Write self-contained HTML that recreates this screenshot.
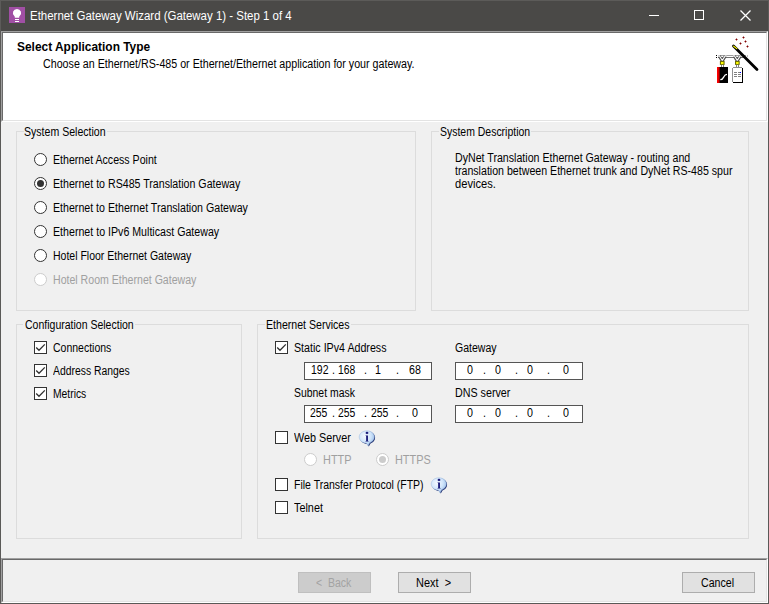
<!DOCTYPE html>
<html><head><meta charset="utf-8">
<style>
*{box-sizing:border-box;margin:0;padding:0}
html,body{width:769px;height:604px;overflow:hidden;background:#f0f0f0}
body{position:relative;font-family:"Liberation Sans",sans-serif;font-size:12px;color:#000;line-height:13px}
.abs,.t,.gb,.cb,.rb,.ip,.btn{position:absolute}
.t{white-space:pre;height:13px;transform-origin:0 0}
.t.w{color:#fff;line-height:15px;height:15px}
.t.b{font-weight:bold}
.t.g{color:#a0a0a0}
.t.g2{color:#a3a3a3}

#titlebar{left:0;top:0;width:769px;height:31px;background:#4a4947}
#header{left:3px;top:33px;width:763px;height:87px;background:#fff}
.gb{border:1px solid #dcdcdc}
.gap{position:absolute;height:1px;background:#f0f0f0}
.rb{width:13px;height:13px;border:1px solid #333;border-radius:50%;background:#fff}
.rb.on::after{content:"";position:absolute;left:2px;top:2px;width:7px;height:7px;border-radius:50%;background:#333}
.rb.dis{border-color:#ccc;background:#fff}
.rb.dis.on::after{background:#ccc}
.cb{width:13px;height:13px;border:1px solid #333;background:#fff}
.cb svg{position:absolute;left:0;top:0}
.ip{height:18px;width:128px;border:1px solid #555;background:#fff}
.btn{height:21px;width:73px;border:1px solid #adadad;background:#e1e1e1}
.btn.dis{background:#ccc;border-color:#bfbfbf}
</style></head><body>
<div class="abs" id="titlebar"></div>
<div class="abs" style="left:0;top:0;width:769px;height:31px;border:1px solid #5c5b59;border-bottom:0"></div>
<!-- app icon -->
<svg class="abs" style="left:9px;top:7px" width="16" height="16" viewBox="0 0 16 16"><rect width="16" height="16" fill="#a04fa4"/><path d="M8 1.900a4.100 4.100 0 0 0-2.700 7.200c.4.400.5.800.5 1.200v.5h4.400v-.5c0-.4.100-.8.500-1.200A4.100 4.100 0 0 0 8 1.900z" fill="#fff"/><rect x="6" y="12" width="4" height="1" fill="#fff"/><rect x="6" y="14" width="4" height="1" fill="#fff"/></svg>
<!-- window controls -->
<svg class="abs" style="left:640px;top:0" width="128" height="31" viewBox="0 0 128 31" fill="none" stroke="#fff" stroke-width="1"><path d="M9 15.500h10"/><rect x="54.500" y="10.500" width="9" height="9"/><path d="M100.500 10.500l10 10M110.500 10.500l-10 10" stroke-width="1.250"/></svg>

<div class="abs" style="left:0;top:31px;width:769px;height:573px;border-left:1px solid #5a5957;border-right:1px solid #5a5957;border-bottom:1px solid #5a5957"></div>
<!-- sunken header panel -->
<div class="abs" style="left:1px;top:31px;width:767px;height:91px;border-top:1px solid #a0a0a0;border-left:1px solid #a0a0a0;border-right:1px solid #fff;border-bottom:1px solid #fff"></div>
<div class="abs" style="left:2px;top:32px;width:765px;height:89px;border-top:1px solid #696969;border-left:1px solid #696969;border-right:1px solid #e3e3e3;border-bottom:1px solid #e3e3e3;background:#fff"></div>
<!-- sunken bottom panel -->
<div class="abs" style="left:1px;top:558px;width:767px;height:45px;border-top:1px solid #a0a0a0;border-left:1px solid #a0a0a0;border-right:1px solid #fff;border-bottom:1px solid #fff"></div>
<div class="abs" style="left:2px;top:559px;width:765px;height:43px;border-top:1px solid #696969;border-left:1px solid #696969;border-right:1px solid #e3e3e3;border-bottom:1px solid #e3e3e3"></div>

<!-- group boxes -->
<div class="gb" style="left:16px;top:131px;width:400px;height:180px"></div><div class="gap" style="left:24px;top:131px;width:83px"></div>
<div class="gb" style="left:431px;top:131px;width:318px;height:180px"></div><div class="gap" style="left:439px;top:131px;width:92px"></div>
<div class="gb" style="left:16px;top:324px;width:226px;height:215px"></div><div class="gap" style="left:23px;top:324px;width:112px"></div>
<div class="gb" style="left:257px;top:324px;width:492px;height:215px"></div><div class="gap" style="left:265px;top:324px;width:86px"></div>

<!-- radios -->
<div class="rb" style="left:34px;top:153px"></div>
<div class="rb on" style="left:34px;top:177px"></div>
<div class="rb" style="left:34px;top:201px"></div>
<div class="rb" style="left:34px;top:225px"></div>
<div class="rb" style="left:34px;top:249px"></div>
<div class="rb dis" style="left:34px;top:273px"></div>

<!-- checkboxes -->
<div class="cb" style="left:34px;top:341px"><svg width="11" height="11" viewBox="0 0 11 11"><path d="M1.200 5.500L4 8.300L9.800 2.400" fill="none" stroke="#303030" stroke-width="1.300"/></svg></div>
<div class="cb" style="left:34px;top:364px"><svg width="11" height="11" viewBox="0 0 11 11"><path d="M1.200 5.500L4 8.300L9.800 2.400" fill="none" stroke="#303030" stroke-width="1.300"/></svg></div>
<div class="cb" style="left:34px;top:387px"><svg width="11" height="11" viewBox="0 0 11 11"><path d="M1.200 5.500L4 8.300L9.800 2.400" fill="none" stroke="#303030" stroke-width="1.300"/></svg></div>
<div class="cb" style="left:275px;top:341px"><svg width="11" height="11" viewBox="0 0 11 11"><path d="M1.200 5.500L4 8.300L9.800 2.400" fill="none" stroke="#303030" stroke-width="1.300"/></svg></div>
<div class="cb" style="left:275px;top:431px"></div>
<div class="cb" style="left:275px;top:478px"></div>
<div class="cb" style="left:275px;top:501px"></div>
<div class="rb dis" style="left:304px;top:453px"></div>
<div class="rb dis on" style="left:376px;top:453px"></div>

<!-- ip boxes -->
<div class="ip" style="left:304px;top:362px"></div>
<div class="ip" style="left:455px;top:362px"></div>
<div class="ip" style="left:304px;top:405px"></div>
<div class="ip" style="left:455px;top:405px"></div>


<div class="btn dis" style="left:298px;top:572px"></div>
<div class="btn" style="left:398px;top:572px"></div>
<div class="btn" style="left:682px;top:572px"></div>

<!-- wizard icon -->
<svg class="abs" style="left:712px;top:34px" width="50" height="54" viewBox="712 34 50 54">
<g shape-rendering="crispEdges">
<rect x="716" y="55" width="1" height="1" fill="#000"/><rect x="716" y="57" width="1" height="1" fill="#000"/>
<rect x="718" y="55" width="28" height="1" fill="#a0a0a0"/>
<rect x="718" y="56" width="28" height="1" fill="#fff"/>
<rect x="718" y="57" width="28" height="1" fill="#707070"/>
<rect x="747" y="55" width="1" height="2" fill="#c0c0c0"/>
</g>
<!-- Y branches -->
<g fill="none" stroke="#505050" stroke-width="3" stroke-linecap="butt"><path d="M719.200 56L722.300 61M725.400 56L722.300 61M734.200 56L737.300 61M740.400 56L737.300 61"/></g>
<g fill="none" stroke="#fff" stroke-width="1.100"><path d="M718 56L719.500 56L722.300 60.500M726.500 56L725.100 56L722.300 60.500M733 56L734.500 56L737.300 60.500M741.500 56L740.100 56L737.300 60.500"/></g>
<rect x="719.900" y="61" width="4.700" height="3.900" fill="#6e6e00"/><rect x="721" y="62" width="2.500" height="2" fill="#ffff00"/>
<rect x="735" y="61" width="4.700" height="3.900" fill="#6e6e00"/><rect x="736.100" y="62" width="2.500" height="2" fill="#ffff00"/>
<g shape-rendering="crispEdges">
<rect x="721" y="65" width="3" height="2" fill="#808080"/><rect x="722" y="65" width="1" height="2" fill="#fff"/>
<rect x="736" y="65" width="3" height="2" fill="#808080"/><rect x="737" y="65" width="1" height="2" fill="#fff"/>
<!-- red/black box -->
<rect x="717" y="67" width="11" height="16" fill="#000"/>
<rect x="717" y="67" width="1" height="16" fill="#ff0000"/><rect x="718" y="67" width="1" height="16" fill="#e00000"/><rect x="719" y="67" width="1" height="16" fill="#800000"/>
<!-- white box -->
<rect x="732" y="67" width="11" height="16" fill="#909090"/>
<rect x="733" y="68" width="9" height="14" fill="#fff"/>
<rect x="742" y="68" width="1" height="15" fill="#000"/><rect x="733" y="82" width="10" height="1" fill="#000"/>
<rect x="732" y="67" width="1" height="1" fill="#fff"/><rect x="742" y="67" width="1" height="1" fill="#fff"/><rect x="732" y="82" width="1" height="1" fill="#fff"/>
<rect x="734" y="72" width="3" height="1" fill="#808080"/><rect x="738" y="72" width="2" height="1" fill="#808080"/><rect x="740" y="72" width="1" height="1" fill="#0000ff"/>
<rect x="734" y="74" width="3" height="1" fill="#808080"/><rect x="738" y="74" width="3" height="1" fill="#808080"/>
<rect x="734" y="76" width="3" height="1" fill="#808080"/><rect x="738" y="76" width="3" height="1" fill="#808080"/>
<!-- sparkles -->
<g fill="#800000"><rect x="736" y="39" width="1" height="1"/><rect x="743" y="37" width="1" height="1"/><rect x="745" y="41" width="1" height="1"/><rect x="740" y="43" width="1" height="1"/><rect x="747" y="46" width="1" height="1"/></g>
<g fill="#800000" opacity=".45"><rect x="735" y="39" width="3" height="1"/><rect x="736" y="38" width="1" height="3"/><rect x="742" y="37" width="3" height="1"/><rect x="743" y="36" width="1" height="3"/><rect x="744" y="41" width="3" height="1"/><rect x="745" y="40" width="1" height="3"/><rect x="739" y="43" width="3" height="1"/><rect x="740" y="42" width="1" height="3"/><rect x="746" y="46" width="3" height="1"/><rect x="747" y="45" width="1" height="3"/></g>
</g>
<!-- S curve -->
<path d="M720.300 79.700C722.500 79.700 723 78.500 723.700 77C724.500 75.300 725 74.400 727 74.400" fill="none" stroke="#fff" stroke-width="1.300"/>
<!-- wand -->
<path d="M733.500 46L757 69.500" stroke="#000" stroke-width="2.800" stroke-linecap="round"/>
<path d="M733.700 46.200L736.800 48.600" stroke="#ffff00" stroke-width="1.100" stroke-linecap="round"/>
</svg>
<svg class="abs" style="left:358px;top:429px" width="18" height="18" viewBox="0 0 18 18">
<defs><radialGradient id="g1" cx="38%" cy="35%" r="75%"><stop offset="0" stop-color="#f4faff"/><stop offset=".55" stop-color="#cfe4fa"/><stop offset="1" stop-color="#8fb6e6"/></radialGradient></defs>
<path d="M9 1.800c4.100 0 7.300 2.700 7.300 6.200c0 2.600-1.800 4.800-4.600 5.700l-1.700 3.100l-1.700-2.700C4.300 13.900 1.200 11.300 1.200 8C1.200 4.500 4.700 1.800 9 1.800z" fill="#0c1c62" opacity=".95" transform="translate(.8 .7)"/>
<path d="M9 1.800c4.100 0 7.300 2.700 7.300 6.200c0 2.600-1.800 4.800-4.600 5.700l-1.700 3.100l-1.700-2.700C4.300 13.900 1.200 11.300 1.200 8C1.200 4.500 4.700 1.800 9 1.800z" fill="url(#g1)" stroke="#9db9dd" stroke-width=".5"/>
<path d="M9 2.500l1.700 1.400L9 5.300L7.300 3.900z" fill="#0c0c70"/>
<path d="M7.300 6.500h2.600v5.200l1 .7H7.200l1-.7V7.300z" fill="#0c0c70"/>
</svg>
<svg class="abs" style="left:430px;top:476px" width="18" height="18" viewBox="0 0 18 18">
<defs><radialGradient id="g2" cx="38%" cy="35%" r="75%"><stop offset="0" stop-color="#f4faff"/><stop offset=".55" stop-color="#cfe4fa"/><stop offset="1" stop-color="#8fb6e6"/></radialGradient></defs>
<path d="M9 1.800c4.100 0 7.300 2.700 7.300 6.200c0 2.600-1.800 4.800-4.600 5.700l-1.700 3.100l-1.700-2.700C4.300 13.900 1.200 11.300 1.200 8C1.200 4.500 4.700 1.800 9 1.800z" fill="#0c1c62" opacity=".95" transform="translate(.8 .7)"/>
<path d="M9 1.800c4.100 0 7.300 2.700 7.300 6.200c0 2.600-1.800 4.800-4.600 5.700l-1.700 3.100l-1.700-2.700C4.300 13.900 1.200 11.300 1.200 8C1.200 4.500 4.700 1.800 9 1.800z" fill="url(#g2)" stroke="#9db9dd" stroke-width=".5"/>
<path d="M9 2.500l1.700 1.400L9 5.300L7.300 3.900z" fill="#0c0c70"/>
<path d="M7.300 6.500h2.600v5.200l1 .7H7.200l1-.7V7.300z" fill="#0c0c70"/>
</svg>
<div class="t w" style="left:30.35px;top:9px;transform:scaleX(0.9546)">Ethernet Gateway Wizard (Gateway 1) - Step 1 of 4</div>
<div class="t b" style="left:17.06px;top:41px;transform:scaleX(0.9936)">Select Application Type</div>
<div class="t " style="left:42.70px;top:58px;transform:scaleX(0.8902)">Choose an Ethernet/RS-485 or Ethernet/Ethernet application for your gateway.</div>
<div class="t " style="left:24.32px;top:126px;transform:scaleX(0.8802)">System Selection</div>
<div class="t " style="left:52.52px;top:154px;transform:scaleX(0.8838)">Ethernet Access Point</div>
<div class="t " style="left:52.51px;top:178px;transform:scaleX(0.8858)">Ethernet to RS485 Translation Gateway</div>
<div class="t " style="left:52.51px;top:202px;transform:scaleX(0.8854)">Ethernet to Ethernet Translation Gateway</div>
<div class="t " style="left:52.51px;top:226px;transform:scaleX(0.8866)">Ethernet to IPv6 Multicast Gateway</div>
<div class="t " style="left:52.82px;top:250px;transform:scaleX(0.8752)">Hotel Floor Ethernet Gateway</div>
<div class="t g" style="left:52.82px;top:274px;transform:scaleX(0.8809)">Hotel Room Ethernet Gateway</div>
<div class="t " style="left:439.53px;top:126px;transform:scaleX(0.8716)">System Description</div>
<div class="t " style="left:454.51px;top:152px;transform:scaleX(0.8860)">DyNet Translation Ethernet Gateway - routing and</div>
<div class="t " style="left:454.60px;top:165px;transform:scaleX(0.8850)">translation between Ethernet trunk and DyNet RS-485 spur</div>
<div class="t " style="left:454.60px;top:178px;transform:scaleX(0.9279)">devices.</div>
<div class="t " style="left:24.60px;top:319px;transform:scaleX(0.8758)">Configuration Selection</div>
<div class="t " style="left:52.70px;top:342px;transform:scaleX(0.8746)">Connections</div>
<div class="t " style="left:53.30px;top:365px;transform:scaleX(0.8652)">Address Ranges</div>
<div class="t " style="left:52.84px;top:388px;transform:scaleX(0.8605)">Metrics</div>
<div class="t " style="left:265.52px;top:319px;transform:scaleX(0.8819)">Ethernet Services</div>
<div class="t " style="left:293.61px;top:342px;transform:scaleX(0.8893)">Static IPv4 Address</div>
<div class="t " style="left:454.80px;top:342px;transform:scaleX(0.8766)">Gateway</div>
<div class="t " style="left:293.63px;top:387px;transform:scaleX(0.8696)">Subnet mask</div>
<div class="t " style="left:454.51px;top:387px;transform:scaleX(0.8934)">DNS server</div>
<div class="t " style="left:294.10px;top:432px;transform:scaleX(0.9000)">Web Server</div>
<div class="t g" style="left:322.59px;top:454px;transform:scaleX(0.9100)">HTTP</div>
<div class="t g" style="left:394.69px;top:454px;transform:scaleX(0.9079)">HTTPS</div>
<div class="t " style="left:293.52px;top:479px;transform:scaleX(0.8755)">File Transfer Protocol (FTP)</div>
<div class="t " style="left:294.40px;top:502px;transform:scaleX(0.9031)">Telnet</div>
<div class="t " style="left:311.13px;top:364px;transform:scaleX(0.8737)">192</div>
<div class="t " style="left:338.04px;top:364px;transform:scaleX(0.8579)">168</div>
<div class="t " style="left:375.44px;top:364px;transform:scaleX(0.8900)">1</div>
<div class="t " style="left:409.01px;top:364px;transform:scaleX(0.8900)">68</div>
<div class="t " style="left:331.62px;top:364px;transform:scaleX(0.8900)">.</div>
<div class="t " style="left:363.82px;top:364px;transform:scaleX(0.8900)">.</div>
<div class="t " style="left:395.82px;top:364px;transform:scaleX(0.8900)">.</div>
<div class="t " style="left:310.40px;top:407px;transform:scaleX(0.8650)">255</div>
<div class="t " style="left:337.70px;top:407px;transform:scaleX(0.8650)">255</div>
<div class="t " style="left:370.60px;top:407px;transform:scaleX(0.8700)">255</div>
<div class="t " style="left:412.03px;top:407px;transform:scaleX(0.8900)">0</div>
<div class="t " style="left:331.62px;top:407px;transform:scaleX(0.8900)">.</div>
<div class="t " style="left:363.82px;top:407px;transform:scaleX(0.8900)">.</div>
<div class="t " style="left:395.82px;top:407px;transform:scaleX(0.8900)">.</div>
<div class="t " style="left:466.63px;top:364px;transform:scaleX(0.8900)">0</div>
<div class="t " style="left:494.93px;top:364px;transform:scaleX(0.8900)">0</div>
<div class="t " style="left:527.18px;top:364px;transform:scaleX(0.8900)">0</div>
<div class="t " style="left:563.09px;top:364px;transform:scaleX(0.8900)">0</div>
<div class="t " style="left:482.62px;top:364px;transform:scaleX(0.8900)">.</div>
<div class="t " style="left:514.82px;top:364px;transform:scaleX(0.8900)">.</div>
<div class="t " style="left:546.82px;top:364px;transform:scaleX(0.8900)">.</div>
<div class="t " style="left:466.63px;top:407px;transform:scaleX(0.8900)">0</div>
<div class="t " style="left:494.93px;top:407px;transform:scaleX(0.8900)">0</div>
<div class="t " style="left:527.18px;top:407px;transform:scaleX(0.8900)">0</div>
<div class="t " style="left:563.09px;top:407px;transform:scaleX(0.8900)">0</div>
<div class="t " style="left:482.62px;top:407px;transform:scaleX(0.8900)">.</div>
<div class="t " style="left:514.82px;top:407px;transform:scaleX(0.8900)">.</div>
<div class="t " style="left:546.82px;top:407px;transform:scaleX(0.8900)">.</div>
<div class="t g2" style="left:315.50px;top:577px;transform:scaleX(0.8750)">&lt;  Back</div>
<div class="t " style="left:416.39px;top:577px;transform:scaleX(0.9135)">Next  &gt;</div>
<div class="t " style="left:700.70px;top:577px;transform:scaleX(0.8838)">Cancel</div>
</body></html>
